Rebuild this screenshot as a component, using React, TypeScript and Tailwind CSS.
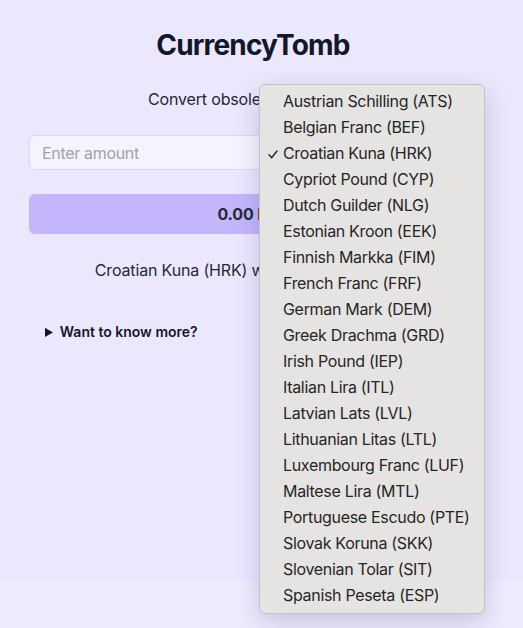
import React from "react";

const currencies = [
  "Austrian Schilling (ATS)",
  "Belgian Franc (BEF)",
  "Croatian Kuna (HRK)",
  "Cypriot Pound (CYP)",
  "Dutch Guilder (NLG)",
  "Estonian Kroon (EEK)",
  "Finnish Markka (FIM)",
  "French Franc (FRF)",
  "German Mark (DEM)",
  "Greek Drachma (GRD)",
  "Irish Pound (IEP)",
  "Italian Lira (ITL)",
  "Latvian Lats (LVL)",
  "Lithuanian Litas (LTL)",
  "Luxembourg Franc (LUF)",
  "Maltese Lira (MTL)",
  "Portuguese Escudo (PTE)",
  "Slovak Koruna (SKK)",
  "Slovenian Tolar (SIT)",
  "Spanish Peseta (ESP)",
];

export default function App() {
  return (
    <div className="relative min-h-screen bg-[#eeebfe] font-['Inter',sans-serif] text-[#1f2937]">
      <div className="h-[581px] bg-[#ebe7fd]">
        <div className="ml-[29px] w-[448px] pt-[27px]">
          <h1 className="text-center text-[28px] leading-9 font-bold tracking-[-0.03em] text-[#111827]">
            CurrencyTomb
          </h1>
          <p className="mt-6 text-center text-base leading-6 tracking-[-0.01em] text-[#1f2937]">
            Convert obsolete currencies
          </p>
          <div className="mt-6 flex gap-3">
            <input
              className="h-[35px] flex-1 rounded-md border border-[#dcd8ea] bg-[#f5f3ff] px-3 text-base tracking-[-0.02em] text-[#1f2937] placeholder:text-[#9ca3af] outline-none"
              placeholder="Enter amount"
            />
            <div className="flex h-[35px] w-[150px] items-center rounded-md border border-[#dcd8ea] bg-[#f5f3ff] px-3 text-base">
              Croatian Kuna (HRK)
            </div>
          </div>
          <div className="mt-6 flex h-[40px] items-center justify-center rounded-md bg-[#c4b5fd] text-base font-bold tracking-[-0.01em] text-[#1f2937]">
            0.00 EUR
          </div>
          <p className="mt-6 text-center text-base leading-6 tracking-[-0.01em]">
            Croatian Kuna (HRK) was replaced in 2023
          </p>
          <details className="mt-6 p-4">
            <summary className="cursor-pointer text-sm leading-5 font-semibold text-[#111827]">
              Want to know more?
            </summary>
          </details>
        </div>
      </div>

      <div className="absolute left-[259px] top-[84px] w-[226px] rounded-[6px] border border-[#c4c3c6] bg-[#e5e4e2] pt-[3px] pb-[5px] shadow-[0_8px_24px_rgba(60,50,110,0.22)]">
        {currencies.map((c) => (
          <div
            key={c}
            className="relative flex h-[26px] items-center pl-[23px] text-[16px] tracking-[-0.02em] text-[#262626]"
          >
            {c === "Croatian Kuna (HRK)" && (
              <svg className="absolute left-[8px] top-[10px]" width="10" height="9" viewBox="0 0 10 9">
                <polyline
                  points="1,4.8 3.6,7.8 9,1"
                  fill="none"
                  stroke="#262626"
                  strokeWidth="1.4"
                  strokeLinecap="round"
                  strokeLinejoin="round"
                />
              </svg>
            )}
            {c}
          </div>
        ))}
      </div>
    </div>
  );
}
